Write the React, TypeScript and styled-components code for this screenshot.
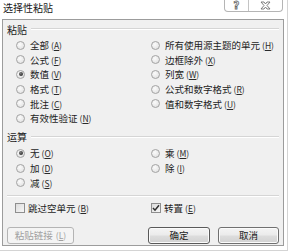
import React from 'react'
import styled, { createGlobalStyle } from 'styled-components'

const GlobalStyle = createGlobalStyle`
    * { box-sizing: border-box; }
    body {
        margin: 0;
        background: #ffffff;
        font-family: "Noto Sans CJK SC", "Noto Sans", sans-serif;
        color: #1c1c1c;
    }
`

const Window = styled.div`
    width: 288px;
    height: 251px;
    display: flex;
    flex-direction: column;
    background: #ffffff;
    padding: 0 3px 4px 2px;
    border-right: 1px solid #d4d4d4;
    border-bottom: 1px solid #d4d4d4;
`

const TitleBar = styled.div`
    height: 19px;
    display: flex;
    align-items: flex-start;
`

const Title = styled.div`
    padding: 1px 0 0 1px;
    font-size: 10px;
    line-height: 13px;
    color: #1a1a1a;
`

const CaptionGroup = styled.div`
    margin-left: auto;
    margin-right: 1px;
    display: flex;
    height: 12px;
    border: 1px solid #b5b5b5;
    border-top: none;
    border-radius: 0 0 4px 4px;
    background: #ffffff;
`

const CaptionButton = styled.div<{ $w: number }>`
    width: ${p => p.$w}px;
    display: flex;
    align-items: center;
    justify-content: center;
    & + & { border-left: 1px solid #c4c4c4; }
`

const HelpGlyph = styled.span`
    font-family: "DejaVu Sans", sans-serif;
    font-weight: bold;
    font-size: 10px;
    line-height: 10px;
    color: #ffffff;
    -webkit-text-stroke: 0.8px #6a6a6a;
`

const Client = styled.div`
    flex: 1;
    display: flex;
    flex-direction: column;
    background: #f0f0f0;
    border: 1px solid #9c9c9c;
    padding: 2px 4px 0 4px;
`

const GroupHeader = styled.div<{ $top: number }>`
    display: flex;
    align-items: center;
    height: 14px;
    margin-top: ${p => p.$top}px;
    font-size: 10px;
`

const HeaderLine = styled.div`
    flex: 1;
    height: 2px;
    margin-left: 4px;
    border-top: 1px solid #d5d5d5;
    border-bottom: 1px solid #ffffff;
`

const OptionGrid = styled.div<{ $rows: number; $top: number }>`
    display: grid;
    grid-template-columns: 135px 1fr;
    grid-template-rows: repeat(${p => p.$rows}, 14.6px);
    grid-auto-flow: column;
    margin-top: ${p => p.$top}px;
    padding-left: 9px;
`

const Option = styled.label`
    display: flex;
    align-items: center;
    font-size: 9.5px;
    white-space: nowrap;
`

const RadioCircle = styled.span<{ $checked?: boolean }>`
    width: 9px;
    height: 9px;
    border-radius: 50%;
    border: 1px solid #a3a3a3;
    background: radial-gradient(circle at 40% 35%, #fbfbfb 0%, #e6e6e6 70%, #d6d6d6 100%);
    margin-right: 5px;
    display: flex;
    align-items: center;
    justify-content: center;
    &::after {
        content: "";
        display: ${p => (p.$checked ? 'block' : 'none')};
        width: 4px;
        height: 4px;
        border-radius: 50%;
        background: radial-gradient(circle at 40% 35%, #7a7a7a 0%, #2a2a2a 80%);
    }
`

const Key = styled.span`
    margin-left: 2px;
    font-size: 8.5px;
    color: #2a2a2a;
    u { text-decoration-thickness: 1px; text-underline-offset: 1px; }
`

const Separator = styled.div`
    height: 2px;
    margin-top: 5px;
    border-top: 1px solid #d5d5d5;
    border-bottom: 1px solid #ffffff;
`

const CheckRow = styled.div`
    display: grid;
    grid-template-columns: 136px 1fr;
    height: 12px;
    margin-top: 4px;
    padding-left: 8px;
`

const CheckBox = styled.span`
    width: 10px;
    height: 10px;
    border: 1px solid #8e8e8e;
    background: linear-gradient(135deg, #dcdcdc 0%, #f6f6f6 100%);
    margin-right: 3px;
    display: flex;
    align-items: center;
    justify-content: center;
`

const ButtonRow = styled.div`
    display: flex;
    align-items: center;
    margin-top: 14px;
    gap: 8px;
`

const Button = styled.div<{ $width: number; $disabled?: boolean; $default?: boolean }>`
    width: ${p => p.$width}px;
    height: 17px;
    display: flex;
    align-items: center;
    justify-content: center;
    border-radius: 3px;
    font-size: 9.5px;
    border: 1px solid ${p => (p.$disabled ? '#b4b4b4' : p.$default ? '#5a5a5a' : '#707070')};
    color: ${p => (p.$disabled ? '#a0a0a0' : '#1c1c1c')};
    background: ${p =>
        p.$disabled
            ? '#f4f4f4'
            : 'linear-gradient(#f4f4f4 0%, #ebebeb 48%, #dddddd 52%, #d2d2d2 100%)'};
    box-shadow: ${p => (p.$disabled ? 'none' : 'inset 0 0 0 1px #fbfbfb')};
    &:first-child { margin-right: auto; }
`

const ButtonKey = styled.span`
    margin-left: 3px;
    font-size: 8.5px;
`

const CloseIcon = () => (
    <svg width="11" height="9" viewBox="0 0 11 9">
        <path
            d="M1 1 H4 L5.5 3 L7 1 H10 L7 4.5 L10 8 H7 L5.5 6 L4 8 H1 L4 4.5 Z"
            fill="#ffffff"
            stroke="#727272"
            strokeWidth="0.9"
            strokeLinejoin="round"
        />
    </svg>
)

const CheckMark = () => (
    <svg width="8" height="8" viewBox="0 0 8 8">
        <path d="M1 4 L3 6.2 L7 1.2" fill="none" stroke="#2e2e2e" strokeWidth="1.5" />
    </svg>
)

interface OptionItem {
    label: string;
    key: string;
    checked?: boolean;
}

const pasteOptions: OptionItem[] = [
    { label: '全部', key: 'A' },
    { label: '公式', key: 'F' },
    { label: '数值', key: 'V', checked: true },
    { label: '格式', key: 'T' },
    { label: '批注', key: 'C' },
    { label: '有效性验证', key: 'N' },
    { label: '所有使用源主题的单元', key: 'H' },
    { label: '边框除外', key: 'X' },
    { label: '列宽', key: 'W' },
    { label: '公式和数字格式', key: 'R' },
    { label: '值和数字格式', key: 'U' },
]

const opOptions: OptionItem[] = [
    { label: '无', key: 'O', checked: true },
    { label: '加', key: 'D' },
    { label: '减', key: 'S' },
    { label: '乘', key: 'M' },
    { label: '除', key: 'I' },
]

const RadioOption: React.FC<{ item: OptionItem }> = ({ item }) => (
    <Option>
        <RadioCircle $checked={item.checked} />
        {item.label}
        <Key>
            (<u>{item.key}</u>)
        </Key>
    </Option>
)

const App: React.FC = () => {
    return (
        <>
            <GlobalStyle />
            <Window>
                <TitleBar>
                    <Title>选择性粘贴</Title>
                    <CaptionGroup>
                        <CaptionButton $w={23}>
                            <HelpGlyph>?</HelpGlyph>
                        </CaptionButton>
                        <CaptionButton $w={34}>
                            <CloseIcon />
                        </CaptionButton>
                    </CaptionGroup>
                </TitleBar>
                <Client>
                    <GroupHeader $top={0}>
                        粘贴
                        <HeaderLine />
                    </GroupHeader>
                    <OptionGrid $rows={6} $top={2}>
                        {pasteOptions.map(o => (
                            <RadioOption key={o.key} item={o} />
                        ))}
                    </OptionGrid>
                    <GroupHeader $top={4}>
                        运算
                        <HeaderLine />
                    </GroupHeader>
                    <OptionGrid $rows={3} $top={2.6}>
                        {opOptions.map(o => (
                            <RadioOption key={o.key} item={o} />
                        ))}
                    </OptionGrid>
                    <Separator />
                    <CheckRow>
                        <Option>
                            <CheckBox />
                            跳过空单元
                            <Key>
                                (<u>B</u>)
                            </Key>
                        </Option>
                        <Option>
                            <CheckBox>
                                <CheckMark />
                            </CheckBox>
                            转置
                            <Key>
                                (<u>E</u>)
                            </Key>
                        </Option>
                    </CheckRow>
                    <ButtonRow>
                        <Button $width={67} $disabled>
                            粘贴链接
                            <ButtonKey>
                                (<u>L</u>)
                            </ButtonKey>
                        </Button>
                        <Button $width={62} $default>确定</Button>
                        <Button $width={61}>取消</Button>
                    </ButtonRow>
                </Client>
            </Window>
        </>
    )
}

export default App
